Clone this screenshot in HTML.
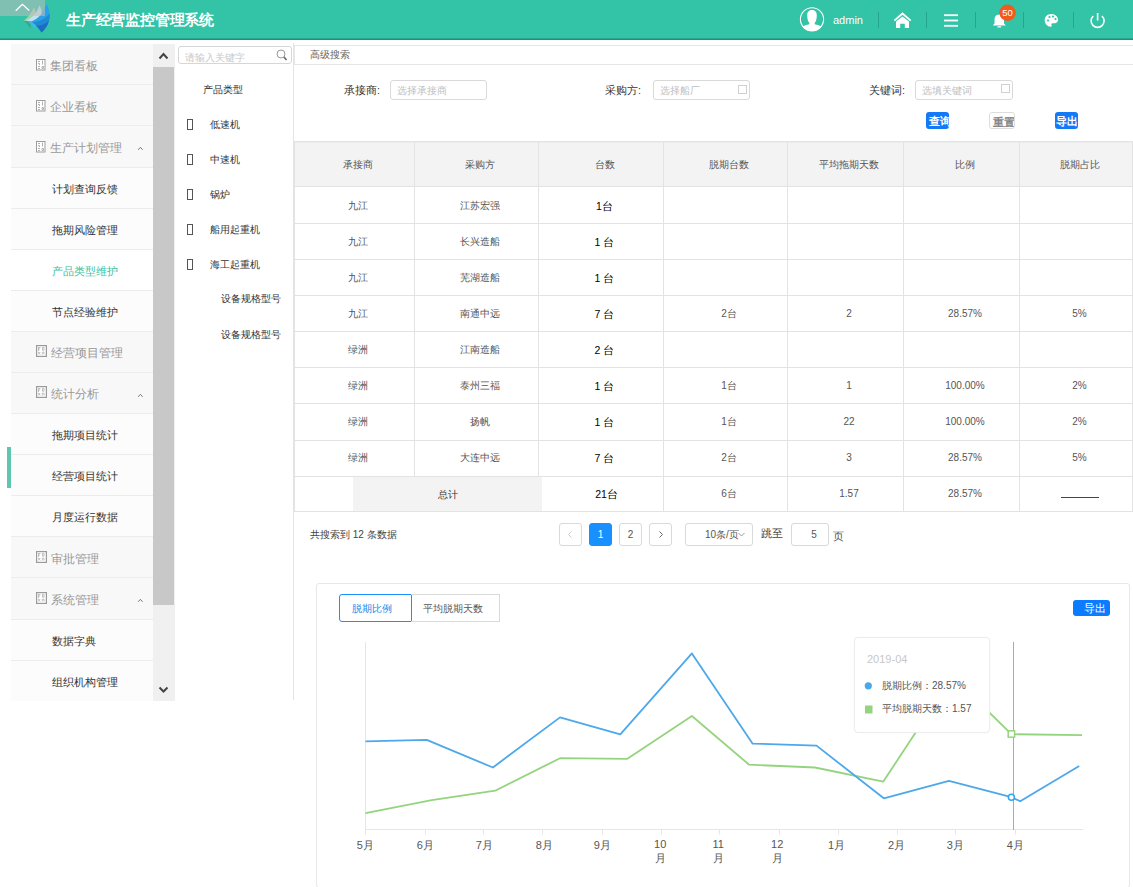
<!DOCTYPE html>
<html><head><meta charset="utf-8">
<style>
*{box-sizing:border-box;margin:0;padding:0}
html,body{width:1133px;height:887px;overflow:hidden;background:#fff;font-family:"Liberation Sans",sans-serif;color:#333}
.a{position:absolute}
.hdr{left:0;top:0;width:1133px;height:40px;background:#33c3a6;border-bottom:1px solid #1c9279;box-shadow:inset 0 -1px 0 #2aa68c}
.tl{left:0;top:0;width:45px;height:16px;background:#7fc6b5}
.title{left:66px;top:10px;font-size:15px;font-weight:bold;color:#fff;line-height:20px;letter-spacing:-0.2px}
.sep{width:1px;height:16px;top:12px;background:#23a58a}
.side{left:11px;top:44px;width:142px;height:657px;background:#f8f8f8}
.mi{position:absolute;left:0;width:142px;height:41px;border-bottom:1px solid #ececec;font-size:11.8px;line-height:44px}
.mi.top{color:#999}
.mi.sub{background:#fcfcfc;color:#333;font-size:10.7px;padding-left:41px;line-height:42px}
.mi.act{background:#fff;color:#3dbf9f}
.ico{position:absolute;left:25px;top:15px;width:10px;height:12px}
.mi .t{position:absolute;left:39px}
.car{position:absolute;left:126px;top:20px;width:8px;height:5px}
.sb{left:153px;top:44px;width:22px;height:657px;background:#f0f0f0}
.thumb{left:153px;top:67px;width:21px;height:538px;background:#c8c8c8}
.tree{left:175px;top:44px;width:118px;height:656px;background:#fff}
.vline{background:#e4e4e4}
.ti{font-size:10.2px;color:#333;line-height:14px}
.cb{width:6px;height:11px;border:1px solid #555}
.lbl{font-size:10.6px;color:#333;line-height:14px}
.inp{height:20px;border:1px solid #d9d9d9;border-radius:3px;background:#fff;font-size:10px;color:#c0c0c0;line-height:20px;padding-left:6px}
.sq{width:9px;height:9px;border:1px solid #d0d0d0}
.btn{height:17px;border-radius:3px;font-size:11px;line-height:19px;color:#fff;background:#1479f5;overflow:hidden;white-space:nowrap;font-weight:bold}
table{border-collapse:collapse;table-layout:fixed}
.tb{left:294px;top:141px;width:839px}
.tb td{border:1px solid #e3e3e3;text-align:center;font-size:11px;color:#555;height:36px;padding:0}
.tb tr.h td{background:#f3f3f3;height:45px;color:#555}
.tb td.n{color:#222}
.tc{font-size:10px;line-height:16px;text-align:center;color:#555;white-space:nowrap}
.tc.n{color:#000;font-size:10.5px}
.xl{width:40px;text-align:center;font-size:11px;line-height:14px;color:#555}
.pg{height:23px;border:1px solid #d9d9d9;border-radius:3px;background:#fff;font-size:10px;line-height:21px;text-align:center;color:#555}
</style></head><body>
<!-- header -->
<div class="a hdr"></div>
<svg class="a" style="left:0;top:0" width="60" height="40">
 <path d="M23.5,20.7 C28,17 32,13 33.8,6.9 C35.5,10 36,14 34.5,18 L30,21.5 Z" fill="#9fd6a8"/>
 <path d="M26,21 C32,18 37,13 39.5,5.3 C42,10 42.5,15 40.5,19 L33,22.5 Z" fill="#c4e2ee"/>
 <path d="M23.5,20.7 L31,21.3 L30.6,28.8 C28.5,25.5 26,22.5 23.5,20.7 Z" fill="#3aa88f"/>
 <path d="M27.3,21.3 L36,22 L35.4,30 C33,26 30,23 27.3,21.3 Z" fill="#3bbbea"/>
 <path d="M31,21.5 C38,19 44,13 46.4,3.7 C50,10 51,19 47.5,25.5 C45.5,29 43.5,31 41.5,32.5 C39,28 35,24 31,21.5 Z" fill="#2aa0e6"/>
 <path d="M32.5,22.3 C40,22 46,18 49.6,13.5 C50,20 48.5,25.5 41.5,32.5 C39,28 36,25 32.5,22.3 Z" fill="#2188d4"/>
 <path d="M36,25.5 C42,26 46.5,23.5 48.8,20.5 C47.5,26 45,29 41.5,32.5 C40,30 38,27.5 36,25.5 Z" fill="#1a6ec2"/>
 <rect x="0" y="0" width="45" height="16" fill="rgb(190,190,190)" fill-opacity="0.55"/>
 <polyline points="15.7,10.8 22.4,4.3 29.2,10.6" fill="none" stroke="#fff" stroke-width="1.3"/>
</svg>
<div class="a title">生产经营监控管理系统</div>
<!-- right icons -->
<svg class="a" style="left:790px;top:0" width="343" height="40">
 <circle cx="22" cy="19.3" r="11.6" fill="none" stroke="#fff" stroke-width="1.1"/>
 <path d="M22,10 C25.5,10 27,12.5 26.8,16 C26.6,19.5 26,21.5 24.7,23 L24.7,24.2 C27.5,25 30,25.6 31.8,26.6 C29,30 26,30.9 22,30.9 C18,30.9 15,30 12.2,26.6 C14,25.6 16.5,25 19.3,24.2 L19.3,23 C18,21.5 17.4,19.5 17.2,16 C17,12.5 18.5,10 22,10 Z" fill="#fff"/>
 <rect x="88" y="12" width="1" height="16" fill="#25a68b"/>
 <path d="M104.3,20.6 L112.5,13.6 L120.7,20.6" fill="none" stroke="#fff" stroke-width="1.9"/>
 <path d="M106,21.6 L112.5,16.6 L119,21.6 L119,28 L114.8,28 L114.8,23.7 L110.2,23.7 L110.2,28 L106,28 Z" fill="#fff"/>
 <rect x="136" y="12" width="1" height="16" fill="#25a68b"/>
 <rect x="154" y="14.3" width="14" height="1.8" fill="#fff"/>
 <rect x="154" y="19.6" width="14" height="1.8" fill="#fff"/>
 <rect x="154" y="24.9" width="14" height="1.8" fill="#fff"/>
 <rect x="185" y="12" width="1" height="16" fill="#25a68b"/>
 <path d="M209.3,14.5 C205.5,14.5 204.5,17.5 204.5,20 L204.5,23.5 L202.8,25.5 L215.8,25.5 L214,23.5 L214,20 C214,17.5 213,14.5 209.3,14.5 Z" fill="#fff"/>
 <rect x="207.3" y="26.2" width="4" height="1.2" rx="0.6" fill="#fff"/>
 <circle cx="217.5" cy="12.8" r="8.2" fill="#f35a1c"/>
 <text x="217.5" y="16" font-family="Liberation Sans" font-size="9.5" fill="#fff" text-anchor="middle">50</text>
 <rect x="233" y="12" width="1" height="16" fill="#25a68b"/>
 <path d="M261.3,14 C257,14 254.7,17 254.7,20.3 C254.7,24 257.5,26.7 260.5,26.7 C261.8,26.7 262,25.8 261.5,25 C261,24.2 261.5,23.2 262.7,23.2 L264.5,23.2 C266.5,23.2 268,21.8 268,19.8 C268,16.5 265,14 261.3,14 Z" fill="#fff"/>
 <circle cx="258" cy="20.5" r="1.1" fill="#33c3a6"/>
 <circle cx="259.5" cy="17" r="1.1" fill="#33c3a6"/>
 <circle cx="263" cy="16.5" r="1.1" fill="#33c3a6"/>
 <circle cx="265.5" cy="19" r="1.1" fill="#33c3a6"/>
 <rect x="283" y="12" width="1" height="16" fill="#25a68b"/>
 <path d="M303.3,16 A6.5,6.5 0 1 0 311.9,16" fill="none" stroke="#fff" stroke-width="1.6"/>
 <rect x="306.8" y="13" width="1.6" height="7.5" fill="#fff"/>
</svg>
<div class="a" style="left:833px;top:13px;font-size:11px;line-height:14px;color:#fff">admin</div>
<div class="a side">
 <div class="mi top" style="top:0px;height:41px"><svg class="ico" width="10" height="12"><rect x="0.5" y="0.5" width="8.5" height="10.5" fill="#fff" stroke="#9c9c9c"/><path d="M2,2.5h2M6.5,1.5v4M2,4.5h1.5v1.5M2,7.5h2M2,9.5h2M6,7.5h1.5v2h-1.5z" stroke="#b0b0b0" stroke-width="1" fill="none"/></svg><span class="t">集团看板</span></div>
 <div class="mi top" style="top:41px;height:41px"><svg class="ico" width="10" height="12"><rect x="0.5" y="0.5" width="8.5" height="10.5" fill="#fff" stroke="#9c9c9c"/><path d="M2,2.5h2M6.5,1.5v4M2,4.5h1.5v1.5M2,7.5h2M2,9.5h2M6,7.5h1.5v2h-1.5z" stroke="#b0b0b0" stroke-width="1" fill="none"/></svg><span class="t">企业看板</span></div>
 <div class="mi top" style="top:82px;height:42px"><svg class="ico" width="10" height="12"><rect x="0.5" y="0.5" width="8.5" height="10.5" fill="#fff" stroke="#9c9c9c"/><path d="M2,2.5h2M6.5,1.5v4M2,4.5h1.5v1.5M2,7.5h2M2,9.5h2M6,7.5h1.5v2h-1.5z" stroke="#b0b0b0" stroke-width="1" fill="none"/></svg><span class="t">生产计划管理</span><svg class="car" width="8" height="5"><polyline points="1.2,3.8 3.4,1.3 5.6,3.8" fill="none" stroke="#777" stroke-width="1"/></svg></div>
 <div class="mi sub" style="top:124px;height:41px">计划查询反馈</div>
 <div class="mi sub" style="top:165px;height:41px">拖期风险管理</div>
 <div class="mi sub act" style="top:206px;height:41px">产品类型维护</div>
 <div class="mi sub" style="top:247px;height:41px">节点经验维护</div>
 <div class="mi top" style="top:288px;height:41px"><svg class="ico" style="left:25px;top:13px;width:11px" width="11" height="12"><rect x="0.6" y="0.6" width="9.8" height="10.8" fill="#fff" stroke="#9a9a9a" stroke-width="1.2"/><path d="M2.5,2v4M2.5,2.5h2M2.5,4h1.5M6.5,2.2h1.5v3h-1.5z M2.2,7l2,2.5M4.2,7l-2,2.5M6.3,9.5v-2.3h1.7v2.3" stroke="#b8b8b8" stroke-width="0.9" fill="none"/></svg><span class="t" style="left:40px;top:-1px;position:absolute">经营项目管理</span></div>
 <div class="mi top" style="top:329px;height:41px"><svg class="ico" style="left:25px;top:13px;width:11px" width="11" height="12"><rect x="0.6" y="0.6" width="9.8" height="10.8" fill="#fff" stroke="#9a9a9a" stroke-width="1.2"/><path d="M2.5,2v4M2.5,2.5h2M2.5,4h1.5M6.5,2.2h1.5v3h-1.5z M2.2,7l2,2.5M4.2,7l-2,2.5M6.3,9.5v-2.3h1.7v2.3" stroke="#b8b8b8" stroke-width="0.9" fill="none"/></svg><span class="t" style="left:40px;top:-1px;position:absolute">统计分析</span><svg class="car" width="8" height="5"><polyline points="1.2,3.8 3.4,1.3 5.6,3.8" fill="none" stroke="#777" stroke-width="1"/></svg></div>
 <div class="mi sub" style="top:370px;height:41px">拖期项目统计</div>
 <div class="mi sub" style="top:411px;height:41px">经营项目统计</div>
 <div class="mi sub" style="top:452px;height:41px">月度运行数据</div>
 <div class="mi top" style="top:493px;height:41px"><svg class="ico" style="left:25px;top:14px;width:11px" width="11" height="12"><rect x="0.6" y="0.6" width="9.8" height="10.8" fill="#fff" stroke="#9a9a9a" stroke-width="1.2"/><path d="M2.5,2v4M2.5,2.5h2M2.5,4h1.5M6.5,2.2h1.5v3h-1.5z M2.2,7l2,2.5M4.2,7l-2,2.5M6.3,9.5v-2.3h1.7v2.3" stroke="#b8b8b8" stroke-width="0.9" fill="none"/></svg><span class="t" style="left:40px">审批管理</span></div>
 <div class="mi top" style="top:534px;height:42px"><svg class="ico" style="left:25px;top:14px;width:11px" width="11" height="12"><rect x="0.6" y="0.6" width="9.8" height="10.8" fill="#fff" stroke="#9a9a9a" stroke-width="1.2"/><path d="M2.5,2v4M2.5,2.5h2M2.5,4h1.5M6.5,2.2h1.5v3h-1.5z M2.2,7l2,2.5M4.2,7l-2,2.5M6.3,9.5v-2.3h1.7v2.3" stroke="#b8b8b8" stroke-width="0.9" fill="none"/></svg><span class="t" style="left:40px">系统管理</span><svg class="car" width="8" height="5"><polyline points="1.2,3.8 3.4,1.3 5.6,3.8" fill="none" stroke="#777" stroke-width="1"/></svg></div>
 <div class="mi sub" style="top:576px;height:41px">数据字典</div>
 <div class="mi sub" style="top:617px;height:40px;border-bottom:none">组织机构管理</div>
</div>
<div class="a" style="left:7px;top:447px;width:4px;height:41px;background:#5cc6af"></div>
<div class="a sb"></div>
<div class="a thumb"></div>
<svg class="a" style="left:153px;top:44px" width="21" height="656">
 <polyline points="6.5,14.5 10.5,10 14.5,14.5" fill="none" stroke="#444" stroke-width="2"/>
 <polyline points="6.5,643.5 10.5,647.5 14.5,643.5" fill="none" stroke="#444" stroke-width="2"/>
</svg>
<div class="a tree"></div>
<div class="a vline" style="left:293px;top:43px;width:1px;height:657px"></div>
<div class="a" style="left:178px;top:46px;width:114px;height:18px;border:1px solid #d6d6d6;border-radius:3px;background:#fff"></div>
<div class="a" style="left:185px;top:51px;font-size:10px;line-height:14px;color:#c8c8c8">请输入关键字</div>
<svg class="a" style="left:276px;top:49px" width="12" height="13"><circle cx="5" cy="5" r="4" fill="none" stroke="#999" stroke-width="1"/><path d="M8,8 L10.5,11" stroke="#666" stroke-width="1.6"/></svg>
<div class="a ti" style="left:203px;top:83px">产品类型</div>
<div class="a cb" style="left:187px;top:119px"></div><div class="a ti" style="left:210px;top:118px">低速机</div>
<div class="a cb" style="left:187px;top:154px"></div><div class="a ti" style="left:210px;top:153px">中速机</div>
<div class="a cb" style="left:187px;top:189px"></div><div class="a ti" style="left:210px;top:188px">锅炉</div>
<div class="a cb" style="left:187px;top:224px"></div><div class="a ti" style="left:210px;top:223px">船用起重机</div>
<div class="a cb" style="left:187px;top:259px"></div><div class="a ti" style="left:210px;top:258px">海工起重机</div>
<div class="a ti" style="left:221px;top:292px">设备规格型号</div>
<div class="a ti" style="left:221px;top:328px">设备规格型号</div>
<!-- main -->
<div class="a" style="left:294px;top:45px;width:839px;height:20px;border:1px solid #e6e6e6;border-right:none"></div>
<div class="a" style="left:310px;top:48px;font-size:10px;line-height:14px;color:#666">高级搜索</div>
<div class="a lbl" style="left:344px;top:83px">承接商:</div>
<div class="a inp" style="left:390px;top:80px;width:97px">选择承接商</div>
<div class="a lbl" style="left:605px;top:83px">采购方:</div>
<div class="a inp" style="left:653px;top:80px;width:97px">选择船厂</div>
<div class="a sq" style="left:738px;top:85px"></div>
<div class="a lbl" style="left:869px;top:83px">关键词:</div>
<div class="a inp" style="left:915px;top:80px;width:98px">选填关键词</div>
<div class="a sq" style="left:1001px;top:84px"></div>
<div class="a btn" style="left:926px;top:112px;width:23px;padding-left:3px">查询</div>
<div class="a btn" style="left:989px;top:112px;width:26px;padding-left:3px;background:#fff;border:1px solid #ddd;color:#888;line-height:18px">重置</div>
<div class="a btn" style="left:1055px;top:112px;width:23px;padding-left:1px">导出</div>
<!-- table -->
<div class="a" style="left:295px;top:142px;width:838px;height:44px;background:#f3f3f3"></div>
<div class="a" style="left:353px;top:477px;width:189px;height:35px;background:#f3f3f3"></div>
<div class="a" style="left:294px;top:141px;width:839px;height:1px;background:#e3e3e3"></div>
<div class="a" style="left:294px;top:186px;width:839px;height:1px;background:#e3e3e3"></div>
<div class="a" style="left:294px;top:223px;width:839px;height:1px;background:#e3e3e3"></div>
<div class="a" style="left:294px;top:259px;width:839px;height:1px;background:#e3e3e3"></div>
<div class="a" style="left:294px;top:295px;width:839px;height:1px;background:#e3e3e3"></div>
<div class="a" style="left:294px;top:331px;width:839px;height:1px;background:#e3e3e3"></div>
<div class="a" style="left:294px;top:367px;width:839px;height:1px;background:#e3e3e3"></div>
<div class="a" style="left:294px;top:403px;width:839px;height:1px;background:#e3e3e3"></div>
<div class="a" style="left:294px;top:440px;width:839px;height:1px;background:#e3e3e3"></div>
<div class="a" style="left:294px;top:476px;width:839px;height:1px;background:#e3e3e3"></div>
<div class="a" style="left:294px;top:511px;width:839px;height:1px;background:#e3e3e3"></div>
<div class="a" style="left:294px;top:142px;width:839px;height:1px;background:#ececec"></div>
<div class="a" style="left:294px;top:141px;width:1px;height:371px;background:#e3e3e3"></div>
<div class="a" style="left:414px;top:141px;width:1px;height:336px;background:#e3e3e3"></div>
<div class="a" style="left:538px;top:141px;width:1px;height:336px;background:#e3e3e3"></div>
<div class="a" style="left:663px;top:141px;width:1px;height:371px;background:#e3e3e3"></div>
<div class="a" style="left:787px;top:141px;width:1px;height:371px;background:#e3e3e3"></div>
<div class="a" style="left:903px;top:141px;width:1px;height:371px;background:#e3e3e3"></div>
<div class="a" style="left:1019px;top:141px;width:1px;height:371px;background:#e3e3e3"></div>
<div class="a" style="left:1132px;top:141px;width:1px;height:371px;background:#e3e3e3"></div>
<div class="a tc" style="left:298px;top:157px;width:120px">承接商</div>
<div class="a tc" style="left:418px;top:157px;width:124px">采购方</div>
<div class="a tc" style="left:542px;top:157px;width:125px">台数</div>
<div class="a tc" style="left:667px;top:157px;width:124px">脱期台数</div>
<div class="a tc" style="left:791px;top:157px;width:116px">平均拖期天数</div>
<div class="a tc" style="left:907px;top:157px;width:116px">比例</div>
<div class="a tc" style="left:1023px;top:157px;width:113px">脱期占比</div>
<div class="a tc" style="left:298px;top:198px;width:120px">九江</div>
<div class="a tc" style="left:418px;top:198px;width:124px">江苏宏强</div>
<div class="a tc n" style="left:542px;top:198px;width:125px">1台</div>
<div class="a tc" style="left:298px;top:234px;width:120px">九江</div>
<div class="a tc" style="left:418px;top:234px;width:124px">长兴造船</div>
<div class="a tc n" style="left:542px;top:234px;width:125px">1 台</div>
<div class="a tc" style="left:298px;top:270px;width:120px">九江</div>
<div class="a tc" style="left:418px;top:270px;width:124px">芜湖造船</div>
<div class="a tc n" style="left:542px;top:270px;width:125px">1 台</div>
<div class="a tc" style="left:298px;top:306px;width:120px">九江</div>
<div class="a tc" style="left:418px;top:306px;width:124px">南通中远</div>
<div class="a tc n" style="left:542px;top:306px;width:125px">7 台</div>
<div class="a tc" style="left:667px;top:306px;width:124px">2台</div>
<div class="a tc" style="left:791px;top:306px;width:116px">2</div>
<div class="a tc" style="left:907px;top:306px;width:116px">28.57%</div>
<div class="a tc" style="left:1023px;top:306px;width:113px">5%</div>
<div class="a tc" style="left:298px;top:342px;width:120px">绿洲</div>
<div class="a tc" style="left:418px;top:342px;width:124px">江南造船</div>
<div class="a tc n" style="left:542px;top:342px;width:125px">2 台</div>
<div class="a tc" style="left:298px;top:378px;width:120px">绿洲</div>
<div class="a tc" style="left:418px;top:378px;width:124px">泰州三福</div>
<div class="a tc n" style="left:542px;top:378px;width:125px">1 台</div>
<div class="a tc" style="left:667px;top:378px;width:124px">1台</div>
<div class="a tc" style="left:791px;top:378px;width:116px">1</div>
<div class="a tc" style="left:907px;top:378px;width:116px">100.00%</div>
<div class="a tc" style="left:1023px;top:378px;width:113px">2%</div>
<div class="a tc" style="left:298px;top:414px;width:120px">绿洲</div>
<div class="a tc" style="left:418px;top:414px;width:124px">扬帆</div>
<div class="a tc n" style="left:542px;top:414px;width:125px">1 台</div>
<div class="a tc" style="left:667px;top:414px;width:124px">1台</div>
<div class="a tc" style="left:791px;top:414px;width:116px">22</div>
<div class="a tc" style="left:907px;top:414px;width:116px">100.00%</div>
<div class="a tc" style="left:1023px;top:414px;width:113px">2%</div>
<div class="a tc" style="left:298px;top:450px;width:120px">绿洲</div>
<div class="a tc" style="left:418px;top:450px;width:124px">大连中远</div>
<div class="a tc n" style="left:542px;top:450px;width:125px">7 台</div>
<div class="a tc" style="left:667px;top:450px;width:124px">2台</div>
<div class="a tc" style="left:791px;top:450px;width:116px">3</div>
<div class="a tc" style="left:907px;top:450px;width:116px">28.57%</div>
<div class="a tc" style="left:1023px;top:450px;width:113px">5%</div>
<div class="a tc" style="left:353px;top:487px;width:189px;color:#333">总计</div>
<div class="a tc n" style="left:546px;top:486px;width:121px">21台</div>
<div class="a tc" style="left:667px;top:486px;width:124px">6台</div>
<div class="a tc" style="left:791px;top:486px;width:116px">1.57</div>
<div class="a tc" style="left:907px;top:486px;width:116px">28.57%</div>
<div class="a" style="left:1061px;top:497px;width:38px;height:1px;background:#444"></div>
<!-- footer -->
<div class="a" style="left:310px;top:528px;font-size:10px;line-height:14px;color:#444">共搜索到 12 条数据</div>
<div class="a pg" style="left:559px;top:523px;width:23px"><svg width="21" height="21"><polyline points="11.5,7.5 8.5,10.5 11.5,13.5" fill="none" stroke="#ccc" stroke-width="1"/></svg></div>
<div class="a pg" style="left:589px;top:523px;width:23px;background:#1890ff;border-color:#1890ff;color:#fff">1</div>
<div class="a pg" style="left:619px;top:523px;width:23px">2</div>
<div class="a pg" style="left:649px;top:523px;width:23px"><svg width="21" height="21"><polyline points="9.5,7.5 12.5,10.5 9.5,13.5" fill="none" stroke="#666" stroke-width="1"/></svg></div>
<div class="a pg" style="left:685px;top:523px;width:68px;text-align:left;padding-left:19px">10条/页</div>
<svg class="a" style="left:737px;top:531px" width="10" height="8"><polyline points="1.5,2 4.5,5 7.5,2" fill="none" stroke="#999" stroke-width="1"/></svg>
<div class="a" style="left:761px;top:526px;font-size:11px;line-height:14px;color:#444">跳至</div>
<div class="a pg" style="left:791px;top:523px;width:38px;padding-left:8px">5</div>
<div class="a" style="left:833px;top:529px;font-size:11px;line-height:14px;color:#555">页</div>
<!-- chart panel -->
<div class="a" style="left:316px;top:583px;width:814px;height:305px;border:1px solid #e8e8e8;border-radius:3px"></div>
<div class="a" style="left:339px;top:594px;width:73px;height:28px;border:1px solid #1890ff;border-radius:3px 0 0 3px;font-size:10px;line-height:27px;color:#1a84e6;text-align:center;padding-right:7px">脱期比例</div>
<div class="a" style="left:411px;top:594px;width:89px;height:28px;border:1px solid #d9d9d9;border-left:none;font-size:10px;line-height:27px;color:#555;text-align:center;padding-right:5px">平均脱期天数</div>
<div class="a btn" style="left:1073px;top:600px;width:37px;height:16px;line-height:16px;text-align:center;background:#0b7cff;font-size:11px;font-weight:normal;padding-left:6px">导出</div>
<svg class="a" style="left:300px;top:630px" width="800" height="257">
 <line x1="65.5" y1="12" x2="65.5" y2="204.5" stroke="#e6e6e6" stroke-width="1"/>
 <line x1="65" y1="199.5" x2="783" y2="199.5" stroke="#e6e6e6" stroke-width="1"/>
 <line x1="125.5" y1="200" x2="125.5" y2="204.5" stroke="#e6e6e6" stroke-width="1"/>
 <line x1="183.5" y1="200" x2="183.5" y2="204.5" stroke="#e6e6e6" stroke-width="1"/>
 <line x1="242.5" y1="200" x2="242.5" y2="204.5" stroke="#e6e6e6" stroke-width="1"/>
 <line x1="302.5" y1="200" x2="302.5" y2="204.5" stroke="#e6e6e6" stroke-width="1"/>
 <line x1="361.5" y1="200" x2="361.5" y2="204.5" stroke="#e6e6e6" stroke-width="1"/>
 <line x1="419.5" y1="200" x2="419.5" y2="204.5" stroke="#e6e6e6" stroke-width="1"/>
 <line x1="479.5" y1="200" x2="479.5" y2="204.5" stroke="#e6e6e6" stroke-width="1"/>
 <line x1="538.5" y1="200" x2="538.5" y2="204.5" stroke="#e6e6e6" stroke-width="1"/>
 <line x1="597.5" y1="200" x2="597.5" y2="204.5" stroke="#e6e6e6" stroke-width="1"/>
 <line x1="655.5" y1="200" x2="655.5" y2="204.5" stroke="#e6e6e6" stroke-width="1"/>
 <line x1="715.5" y1="200" x2="715.5" y2="204.5" stroke="#e6e6e6" stroke-width="1"/>
 <polyline points="65.5,183.2 131.7,170.2 195.2,160.7 260.0,128.2 327.4,128.8 391.9,86.0 449.1,134.7 515.0,137.5 583.3,151.6 652.5,46.5 711.4,104.2 782.0,105.2" fill="none" stroke="#95d47e" stroke-width="1.8" stroke-linejoin="round"/>
 <polyline points="65.5,111.3 126.7,109.9 192.9,137.5 260.0,87.4 320.3,104.3 391.9,23.4 452.5,113.6 516.5,115.6 583.8,168.3 649.0,150.8 711.4,167.2 720.2,171.3 779.2,136.1" fill="none" stroke="#4da8ea" stroke-width="1.8" stroke-linejoin="round"/>
 <line x1="713.5" y1="12" x2="713.5" y2="200" stroke="#aaa" stroke-width="1"/>
 <rect x="708.2" y="100.8" width="6.4" height="6.4" fill="#fff" stroke="#95d47e" stroke-width="1.5"/>
 <circle cx="711.4" cy="167.2" r="3" fill="#fff" stroke="#2fa8f2" stroke-width="1.6"/>
</svg>
<div class="a xl" style="left:345.2px;top:838px">5月</div>
<div class="a xl" style="left:405.2px;top:838px">6月</div>
<div class="a xl" style="left:464.2px;top:838px">7月</div>
<div class="a xl" style="left:524.2px;top:838px">8月</div>
<div class="a xl" style="left:582.2px;top:838px">9月</div>
<div class="a xl" style="left:640.2px;top:837px">10<br>月</div>
<div class="a xl" style="left:698.2px;top:837px">11<br>月</div>
<div class="a xl" style="left:757.2px;top:837px">12<br>月</div>
<div class="a xl" style="left:816.5px;top:838px">1月</div>
<div class="a xl" style="left:876.5px;top:838px">2月</div>
<div class="a xl" style="left:935.2px;top:838px">3月</div>
<div class="a xl" style="left:995.2px;top:838px">4月</div>
<div class="a" style="left:854px;top:637px;width:136px;height:96px;background:#fff;border:1px solid #ececec;border-radius:4px;box-shadow:0 0 2px rgba(0,0,0,0.04)"></div>
<div class="a" style="left:867px;top:652px;font-size:11px;line-height:14px;color:#c8c8c8">2019-04</div>
<svg class="a" style="left:860px;top:678px" width="16" height="40"><circle cx="8.3" cy="7.8" r="3.6" fill="#4aa8ea"/><rect x="5" y="27.5" width="7.5" height="8" fill="#95d47e"/></svg>
<div class="a" style="left:882px;top:679px;font-size:10px;line-height:14px;color:#555">脱期比例：28.57%</div>
<div class="a" style="left:882px;top:702px;font-size:10px;line-height:14px;color:#555">平均脱期天数：1.57</div>
</body></html>
